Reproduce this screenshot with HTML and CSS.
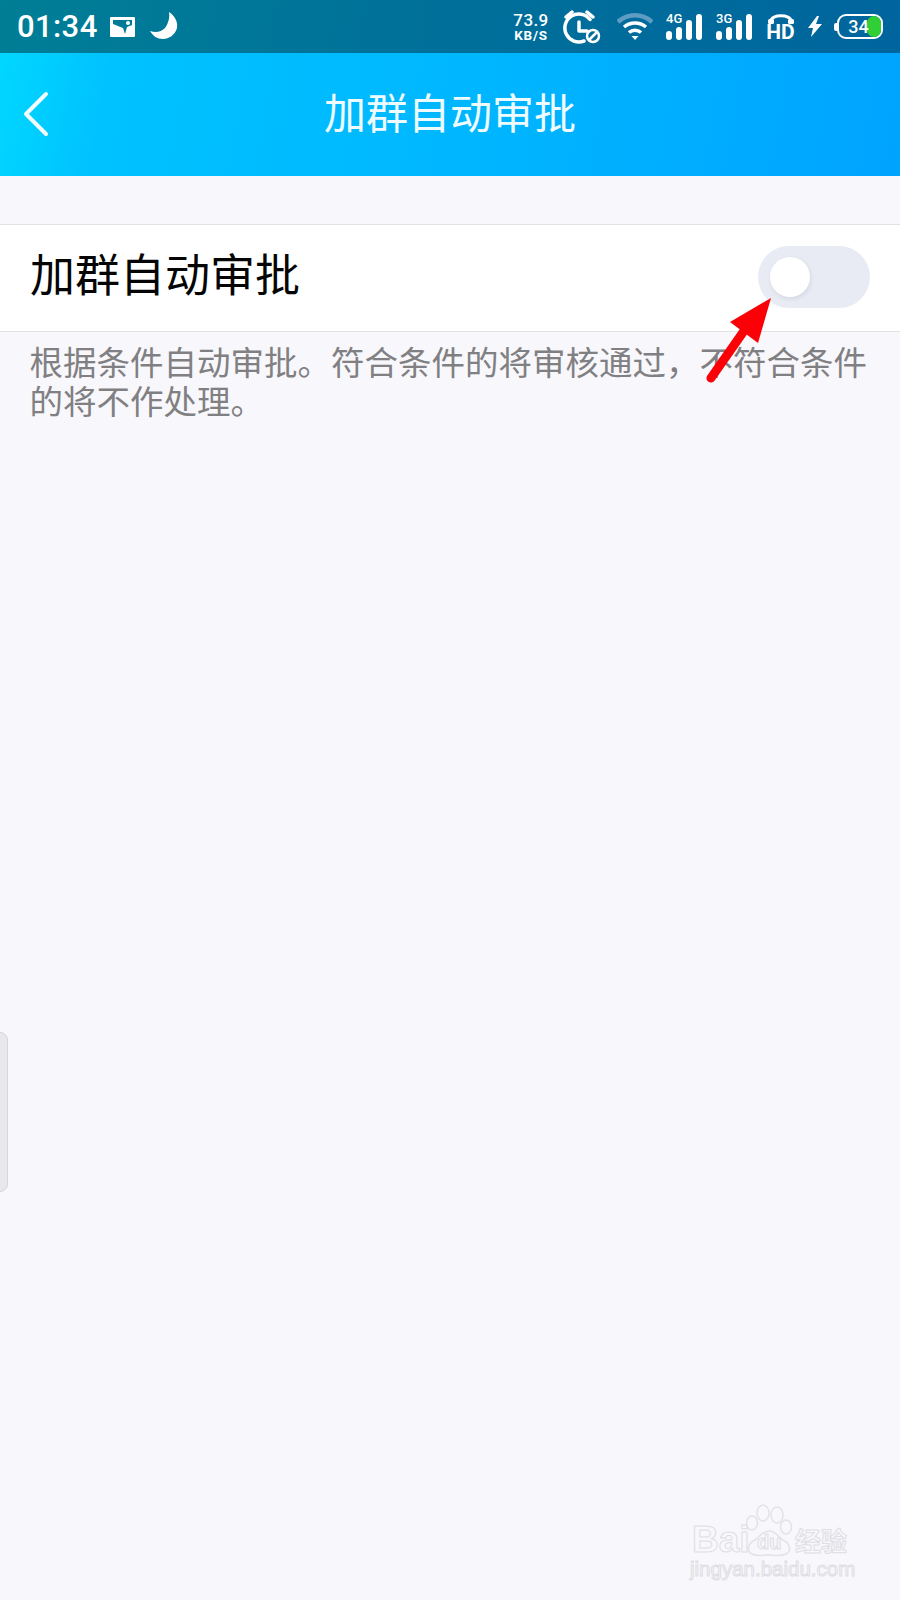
FILE: index.html
```html
<!DOCTYPE html>
<html lang="zh-CN">
<head>
<meta charset="utf-8">
<title>加群自动审批</title>
<link rel="stylesheet" href="styles.css">
</head>
<body>
<div class="screen">
  <header class="status">
    <div class="status-left">
      <span class="time">01:34</span>
      <svg class="ic-image" viewBox="0 0 25 20"><path fill="#fff" fill-rule="evenodd" d="M1 0h23a1 1 0 0 1 1 1v18a1 1 0 0 1-1 1H1a1 1 0 0 1-1-1V1a1 1 0 0 1 1-1zM3 3v4l10 4 2 6 2-7 5-2V3z"/><circle cx="18" cy="6" r="2" fill="#fff"/></svg>
      <svg class="ic-moon" viewBox="0 0 28 27"><path fill="#fff" d="M19 0c6 4 9 10 8 16-2 7-8 11-14 11C7 27 3 24 0 19c6 2 11 1 15-3 3-4 5-10 4-16z"/></svg>
    </div>
    <div class="status-right">
      <div class="speed"><span class="speed-val">73.9</span><span class="speed-unit">KB/S</span></div>
      <svg class="ic-alarm" viewBox="0 0 38 34"><g fill="none" stroke="#fff" stroke-width="3.500" stroke-linecap="round" stroke-linejoin="round"><path d="M27 9.500A14 14 0 1 0 21 31"/><path d="M16 12v9h8"/><path d="M3 7l6-5M24 2l6 5"/></g><circle cx="30" cy="26" r="6" fill="none" stroke="#fff" stroke-width="2.500"/><path d="M26 30l8-8" stroke="#fff" stroke-width="2.500"/></svg>
      <svg class="ic-wifi" viewBox="0 0 36 27"><path d="M1 9a25 25 0 0 1 34 0" fill="none" stroke="#5e9cc4" stroke-width="4.500"/><path d="M7 14a17 17 0 0 1 22 0" fill="none" stroke="#fff" stroke-width="3.500"/><path d="M12 19.500a9 9 0 0 1 12 0" fill="none" stroke="#fff" stroke-width="3.500"/><path d="M14.500 23h7L18 27z" fill="#fff"/></svg>
      <div class="signal"><span class="net">4G</span><svg class="bars" viewBox="0 0 36 26"><g fill="#fff"><rect x="0" y="17" width="6" height="9" rx="3"/><rect x="10" y="13" width="6" height="13" rx="3"/><rect x="20" y="6" width="6" height="20" rx="3"/><rect x="30" y="0" width="6" height="26" rx="3"/></g></svg></div>
      <div class="signal"><span class="net">3G</span><svg class="bars" viewBox="0 0 36 26"><g fill="#fff"><rect x="0" y="17" width="6" height="9" rx="3"/><rect x="10" y="13" width="6" height="13" rx="3"/><rect x="20" y="6" width="6" height="20" rx="3"/><rect x="30" y="0" width="6" height="26" rx="3"/></g></svg></div>
      <div class="hd"><svg class="ic-phone" viewBox="0 0 28 10"><path d="M4 7C4 0 24 0 24 7" fill="none" stroke="#fff" stroke-width="3"/><rect x="1" y="5" width="6" height="5" rx="1.500" fill="#fff"/><rect x="21" y="5" width="6" height="5" rx="1.500" fill="#fff"/></svg><span class="hd-text">HD</span></div>
      <svg class="ic-bolt" viewBox="0 0 14 21"><path fill="#fff" d="M9 0L0 12h5L3 21l11-13H8l3-8z"/></svg>
      <div class="battery"><span class="batt-cap"></span><div class="batt-body"><span class="batt-fill"></span><span class="batt-num">34</span></div></div>
    </div>
  </header>

  <nav class="navbar">
    <svg class="back" viewBox="0 0 26 46"><path d="M23 3L3 23l20 20" fill="none" stroke="#f2fcff" stroke-width="4" stroke-linecap="round" stroke-linejoin="round"/></svg>
    <h1 class="title">加群自动审批</h1>
  </nav>

  <main class="content">
    <section class="row">
      <span class="row-label">加群自动审批</span>
      <div class="toggle"><span class="knob"></span></div>
    </section>
    <p class="desc">根据条件自动审批。符合条件的将审核通过，不符合条件的将不作处理。</p>
  </main>

  <svg class="arrow" viewBox="0 0 70 90"><path d="M5 80L40 30" stroke="#fb0006" stroke-width="9" stroke-linecap="round" fill="none"/><path fill="#fb0006" d="M65 0L52 45 24 24z"/></svg>

  <div class="side-handle"></div>

  <div class="watermark">
    <svg class="paw" viewBox="0 0 44 50"><g fill="#f8f7fb" stroke="#e3e2e6" stroke-width="1.500"><ellipse cx="15" cy="8" rx="6" ry="8"/><ellipse cx="29" cy="10" rx="6" ry="8"/><ellipse cx="4" cy="18" rx="5.500" ry="7"/><ellipse cx="38" cy="22" rx="5.500" ry="7"/><path d="M21 26C28 26 30 32 35 35C42 38 44 46 38 49C32 52 26 50 21 50C15 50 9 52 4 49C-2 46 0 38 7 35C12 32 14 26 21 26z"/></g></svg>
    <span class="wm-bai">Bai</span>
    <span class="wm-du">du</span>
    <span class="wm-jy">经验</span>
    <span class="wm-url">jingyan.baidu.com</span>
  </div>
</div>
</body>
</html>
```
FILE: styles.css
```css
* { box-sizing: border-box; }
html, body { margin: 0; padding: 0; }
body { width: 900px; height: 1600px; overflow: hidden; font-family: "Noto Sans CJK SC", "Noto Sans", sans-serif; }
.screen { position: relative; width: 900px; height: 1600px; background: #f8f7fb; display: flex; flex-direction: column; }

.status { height: 53px; flex: none; display: flex; justify-content: space-between; align-items: center; padding: 0 17px; background: linear-gradient(100deg, #007e96 0%, #00709a 50%, #00659e 100%); color: #fff; }
.status-left { display: flex; align-items: center; }
.time { font: 500 31px/36px Roboto, sans-serif; letter-spacing: .4px; width: 93px; }
.ic-image { width: 25px; height: 20px; }
.ic-moon { width: 28px; height: 27px; margin-left: 15px; margin-top: -2px; }
.status-right { display: flex; align-items: center; }
.speed { display: flex; flex-direction: column; align-items: center; width: 36px; }
.speed-val { font: 500 17px/16px Roboto, sans-serif; letter-spacing: .4px; }
.speed-unit { font: 700 13.500px/14px Roboto, sans-serif; letter-spacing: .7px; }
.ic-alarm { width: 38px; height: 34px; margin-left: 14px; }
.ic-wifi { width: 36px; height: 27px; margin-left: 16px; }
.signal { position: relative; width: 36px; height: 26px; margin-left: 13px; }
.signal + .signal { margin-left: 14px; }
.net { position: absolute; left: 0; top: -1px; font: 500 13px/11px Roboto, sans-serif; }
.bars { position: absolute; left: 0; top: 0; width: 36px; height: 26px; }
.hd { display: flex; flex-direction: column; align-items: center; width: 29px; margin-left: 14px; }
.ic-phone { width: 28px; height: 10px; }
.hd-text { font: 700 21px/16px Roboto, sans-serif; }
.ic-bolt { width: 14px; height: 21px; margin-left: 13px; }
.battery { display: flex; align-items: center; margin-left: 12px; }
.batt-cap { width: 3px; height: 8px; background: #fff; border-radius: 2px 0 0 2px; }
.batt-body { position: relative; width: 46px; height: 25px; border: 2.500px solid #fff; border-radius: 9px; overflow: hidden; display: flex; align-items: center; justify-content: center; }
.batt-fill { position: absolute; right: 0; top: 0; bottom: 0; width: 14px; background: #2fcf35; border-radius: 7px 6px 6px 7px; }
.batt-num { position: relative; font: 500 18px/20px Roboto, sans-serif; color: #fff; margin-right: 3px; }

.navbar { position: relative; height: 123px; flex: none; display: flex; align-items: center; justify-content: center; background: linear-gradient(100deg, #00d7ff 0%, #00c2ff 12%, #00b7ff 50%, #00a4ff 100%); }
.back { position: absolute; left: 23px; top: 38px; width: 26px; height: 46px; }
.title { margin: -7px 0 0; font-size: 42px; line-height: 60px; font-weight: 400; color: #eefbff; }

.content { flex: 1; padding-top: 48px; }
.row { height: 108px; display: flex; align-items: center; justify-content: space-between; padding: 0 30px; background: #fff; border-top: 1px solid #e2e2e6; border-bottom: 1px solid #e2e2e6; }
.row-label { font-size: 45px; line-height: 60px; color: #050505; margin-top: -10px; }
.toggle { width: 112px; height: 62px; padding: 11px 12px; border-radius: 31px; background: #e9ebf4; margin-top: -3px; }
.knob { display: block; width: 40px; height: 40px; border-radius: 50%; background: #fff; box-shadow: 1px 2px 4px rgba(120,120,150,.18); }
.desc { margin: 0; padding: 10px 30px 0 29.500px; width: 900px; font-size: 33.500px; line-height: 38.500px; color: #808083; }

.arrow { position: absolute; left: 706px; top: 298px; width: 70px; height: 90px; overflow: visible; }
.side-handle { position: absolute; left: -2px; top: 1032px; width: 10px; height: 160px; background: #e9e8ec; border: 1px solid #d6d6d9; border-radius: 0 8px 8px 0; }

.watermark { position: absolute; left: 690px; top: 1505px; width: 165px; height: 80px; color: #f8f7fb; }
.paw { position: absolute; left: 58px; top: 0; width: 44px; height: 50px; overflow: visible; }
.wm-bai, .wm-du, .wm-jy, .wm-url { position: absolute; white-space: nowrap; -webkit-text-stroke: 1px #dfdee3; }
.wm-bai { left: 2px; top: 15px; font: 700 37px/40px "Liberation Sans", sans-serif; }
.wm-du { left: 67px; top: 25px; font: 700 20px/24px "Liberation Sans", sans-serif; }
.wm-jy { left: 105px; top: 18px; font-size: 26px; line-height: 34px; font-weight: 700; }
.wm-url { left: 0; top: 52px; font: 400 20.500px/24px "Liberation Sans", sans-serif; }
```
